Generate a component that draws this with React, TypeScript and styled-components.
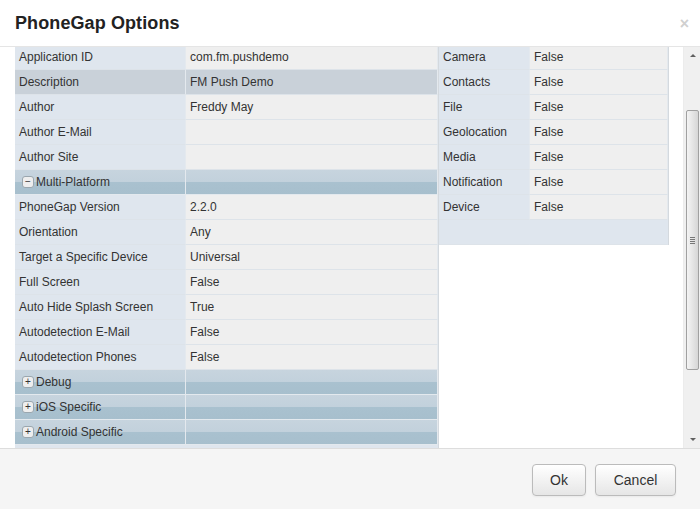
import React from 'react';
import styled, { createGlobalStyle } from 'styled-components';

const GlobalStyle = createGlobalStyle`
  html, body {
    margin: 0;
    padding: 0;
    background: #ffffff;
    font-family: "Liberation Sans", Arial, sans-serif;
  }
`;

const Dialog = styled.div`
  display: flex;
  flex-direction: column;
  width: 700px;
  height: 509px;
  background: #ffffff;
  overflow: hidden;
`;

const Header = styled.div`
  display: flex;
  align-items: center;
  justify-content: space-between;
  height: 46px;
  padding: 0 11px 0 15px;
  border-bottom: 1px solid #e5e5e5;
  box-sizing: content-box;
`;

const Title = styled.h3`
  margin: 0;
  font-size: 18px;
  font-weight: bold;
  color: #222222;
  letter-spacing: 0.1px;
`;

const Close = styled.span`
  font-size: 16px;
  font-weight: bold;
  color: #d0d0d0;
  line-height: 1;
  margin-top: 2px;
`;

const Body = styled.div`
  display: flex;
  height: 401px;
  overflow: hidden;
`;

const Content = styled.div`
  flex: 1;
  display: flex;
  align-items: flex-start;
  padding-left: 15px;
  margin-top: -2px;
`;

const Grid = styled.div<{ cols: string }>`
  display: grid;
  grid-template-columns: ${({ cols }) => cols};
  border-right: 1px solid #d4d9de;
`;

const Cell = styled.div<{ kind: 'label' | 'value' | 'selected' | 'group' | 'blank' }>`
  height: 24px;
  line-height: 24px;
  padding-left: 4px;
  font-size: 12px;
  color: #333333;
  white-space: nowrap;
  overflow: hidden;
  border-bottom: 1px solid #dde3e9;
  border-right: 1px solid #e4e9ee;
  display: flex;
  align-items: center;
  background: ${({ kind }) =>
    kind === 'label'
      ? '#dfe6ee'
      : kind === 'value'
        ? '#efefef'
        : kind === 'selected'
          ? '#c9d1d9'
          : kind === 'blank'
            ? '#dfe6ee'
            : 'linear-gradient(to bottom, #c7d4de 0%, #c2d1dc 48%, #a9c1cf 52%, #a7bfcd 100%)'};
  ${({ kind }) => (kind === 'group' ? 'border-bottom-color: #e3e9ee; padding-left: 7px;' : '')}
  ${({ kind }) => (kind === 'blank' ? 'border-right-color: #dfe6ee;' : '')}
`;

const Toggle = styled.span`
  display: inline-flex;
  align-items: center;
  justify-content: center;
  width: 10px;
  height: 10px;
  margin-right: 2px;
  border: 1px solid #9aa6ae;
  border-radius: 3px;
  background: #eeeeee;
  font-size: 10px;
  line-height: 10px;
  color: #333333;
`;

const Gap = styled.div`
  width: 14px;
`;

const RightArea = styled.div`
  flex: 1;
  align-self: stretch;
  display: flex;
  align-items: flex-start;
`;

const ScrollBar = styled.div`
  width: 17px;
  background: #f0f0f0;
  display: flex;
  flex-direction: column;
  align-items: center;
  border-left: 1px solid #ececec;
`;

const Arrow = styled.div<{ down?: boolean }>`
  height: 17px;
  width: 17px;
  display: flex;
  align-items: center;
  justify-content: center;
  &::after {
    content: '';
    border-left: 3px solid transparent;
    border-right: 3px solid transparent;
    ${({ down }) => (down ? 'border-top: 3px solid #606060;' : 'border-bottom: 3px solid #606060;')}
  }
`;

const TrackSpace = styled.div<{ h: number }>`
  height: ${({ h }) => h}px;
`;

const Thumb = styled.div`
  width: 13px;
  height: 260px;
  border: 1px solid #a0a0a0;
  border-radius: 2px;
  box-sizing: border-box;
  background: linear-gradient(to right, #f4f4f4, #e2e2e2 60%, #d6d6d6);
  display: flex;
  align-items: center;
  justify-content: center;
`;

const Grip = styled.div`
  width: 5px;
  height: 7px;
  background: repeating-linear-gradient(to bottom, #777 0 1px, transparent 1px 2px);
`;

const Footer = styled.div`
  flex: 1;
  display: flex;
  justify-content: flex-end;
  align-items: center;
  gap: 9px;
  padding: 0 24px 0 0;
  background: #f5f5f5;
  border-top: 1px solid #dddddd;
`;

const Button = styled.button<{ w: number }>`
  width: ${({ w }) => w}px;
  height: 32px;
  margin-top: 2px;
  border: 1px solid #bbbbbb;
  border-radius: 4px;
  background: linear-gradient(to bottom, #ffffff, #e6e6e6);
  box-shadow: inset 0 1px 0 rgba(255, 255, 255, 0.2), 0 1px 2px rgba(0, 0, 0, 0.05);
  font-family: "Liberation Sans", Arial, sans-serif;
  font-size: 14px;
  color: #333333;
  padding: 0;
`;

type Row =
  | { label: string; value: string; selected?: boolean }
  | { group: string; open: boolean }
  | { blank: true };

const leftRows: Row[] = [
  { label: 'Application ID', value: 'com.fm.pushdemo' },
  { label: 'Description', value: 'FM Push Demo', selected: true },
  { label: 'Author', value: 'Freddy May' },
  { label: 'Author E-Mail', value: '' },
  { label: 'Author Site', value: '' },
  { group: 'Multi-Platform', open: true },
  { label: 'PhoneGap Version', value: '2.2.0' },
  { label: 'Orientation', value: 'Any' },
  { label: 'Target a Specific Device', value: 'Universal' },
  { label: 'Full Screen', value: 'False' },
  { label: 'Auto Hide Splash Screen', value: 'True' },
  { label: 'Autodetection E-Mail', value: 'False' },
  { label: 'Autodetection Phones', value: 'False' },
  { group: 'Debug', open: false },
  { group: 'iOS Specific', open: false },
  { group: 'Android Specific', open: false },
  { blank: true },
];

const rightRows: Row[] = [
  { label: 'Camera', value: 'False' },
  { label: 'Contacts', value: 'False' },
  { label: 'File', value: 'False' },
  { label: 'Geolocation', value: 'False' },
  { label: 'Media', value: 'False' },
  { label: 'Notification', value: 'False' },
  { label: 'Device', value: 'False' },
  { blank: true },
];

const renderRows = (rows: Row[]) =>
  rows.map((row, i) => {
    if ('blank' in row) {
      return (
        <React.Fragment key={i}>
          <Cell kind="blank" />
          <Cell kind="blank" />
        </React.Fragment>
      );
    }
    if ('group' in row) {
      return (
        <React.Fragment key={i}>
          <Cell kind="group">
            <Toggle>{row.open ? '−' : '+'}</Toggle>
            {row.group}
          </Cell>
          <Cell kind="group" />
        </React.Fragment>
      );
    }
    return (
      <React.Fragment key={i}>
        <Cell kind={row.selected ? 'selected' : 'label'}>{row.label}</Cell>
        <Cell kind={row.selected ? 'selected' : 'value'}>{row.value}</Cell>
      </React.Fragment>
    );
  });

const App = () => {
  return (
    <Dialog>
      <GlobalStyle />
      <Header>
        <Title>PhoneGap Options</Title>
        <Close>×</Close>
      </Header>
      <Body>
        <Content>
          <Grid cols="171px 252px">{renderRows(leftRows)}</Grid>
          <RightArea>
            <Grid cols="91px 138px">{renderRows(rightRows)}</Grid>
          </RightArea>
          <Gap />
        </Content>
        <ScrollBar>
          <Arrow />
          <TrackSpace h={46} />
          <Thumb>
            <Grip />
          </Thumb>
          <TrackSpace h={61} />
          <Arrow down />
        </ScrollBar>
      </Body>
      <Footer>
        <Button w={54}>Ok</Button>
        <Button w={81}>Cancel</Button>
      </Footer>
    </Dialog>
  );
};

export default App;
